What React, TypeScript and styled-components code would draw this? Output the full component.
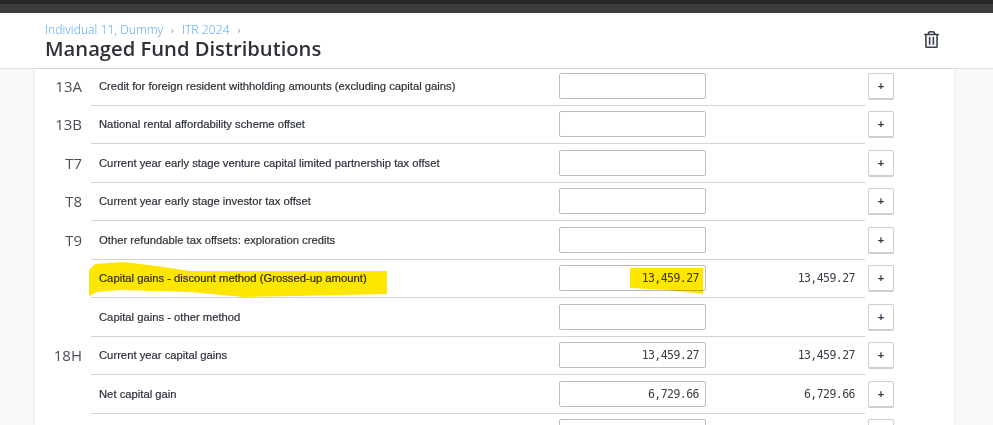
import styled, { createGlobalStyle } from "styled-components";
import { FaRegTrashAlt } from "react-icons/fa";

const GlobalStyle = createGlobalStyle`
    html, body {
        margin: 0;
        height: 425px;
        overflow: hidden;
        background-color: #f7f8fa;
    }
`;

const TopBar = styled.div`
    height: 13px;
    box-sizing: border-box;
    background-color: #3d3d3d;
    border-top: 4px solid #282828;
`;

const Header = styled.header`
    height: 56px;
    box-sizing: border-box;
    display: flex;
    justify-content: space-between;
    padding: 9px 53px 0 45px;
    background-color: #fff;
    border-bottom: 1px solid #dedede;
`;

const Crumbs = styled.div`
    display: flex;
    align-items: center;
    gap: 8px;
    height: 15px;
    font: 300 12.2px/15px "Open Sans", sans-serif;
    color: #4fa3ee;
`;

const Chevron = styled.span`
    font-size: 11px;
    color: #666;
`;

const Title = styled.h1`
    margin: 0;
    font: 600 20.2px/23px "Open Sans", sans-serif;
    color: #2e3238;
`;

const TrashButton = styled.div`
    margin-top: 9px;
    color: #39414d;
    font-size: 17px;
    line-height: 17px;
`;

const Card = styled.main`
    width: 919px;
    height: 356px;
    margin-left: 35px;
    overflow: hidden;
    background-color: #fff;
    box-shadow: 0 0 3px rgba(0, 0, 0, 0.08);
`;

const Row = styled.div`
    position: relative;
    display: flex;
    height: 38.5px;
    box-sizing: border-box;
    &:first-child {
        height: 36.75px;
    }
`;

const Code = styled.div`
    width: 56px;
    box-sizing: border-box;
    padding: 5.25px 9px 0 0;
    text-align: right;
    font: 400 15px/26px "Open Sans", sans-serif;
    color: #4a4f56;
    ${Row}:first-child & {
        padding-top: 4px;
    }
`;

const Line = styled.div`
    width: 774px;
    box-sizing: border-box;
    display: flex;
    padding: 5.25px 10px 0 8px;
    border-bottom: 1px solid #d4d4d4;
    ${Row}:first-child & {
        padding-top: 4px;
    }
`;

const Label = styled.div`
    width: 460px;
    font: 400 11.25px/26px "Liberation Sans", Arial, sans-serif;
    -webkit-text-stroke: 0.2px #2c3138;
    color: #2c3138;
`;

const Amount = styled.input`
    width: 147px;
    height: 26px;
    box-sizing: border-box;
    padding: 0 6px 0 0;
    border: 1px solid #bcbcbc;
    border-radius: 2px;
    outline: none;
    background: transparent;
    text-align: right;
    font: 400 11.5px "DejaVu Sans Mono", monospace;
    letter-spacing: -0.55px;
    color: #3a3f46;
`;

const Total = styled.div`
    flex: 1;
    text-align: right;
    font: 400 11.5px/26px "DejaVu Sans Mono", monospace;
    letter-spacing: -0.55px;
    color: #3a3f46;
`;

const AddButton = styled.button`
    width: 26px;
    height: 27px;
    margin: 5.25px 0 0 3px;
    padding: 0;
    box-sizing: border-box;
    border: 1px solid #cfcfcf;
    border-bottom-width: 2px;
    border-radius: 2px;
    background-color: #fff;
    font: 700 11px "Liberation Sans", sans-serif;
    color: #333a44;
    ${Row}:first-child & {
        margin-top: 4px;
    }
`;

const Marker = styled.svg<{ $left: number }>`
    position: absolute;
    left: ${(props) => props.$left}px;
    top: 0;
    overflow: visible;
    mix-blend-mode: multiply;
    pointer-events: none;
`;

const rows = [
    { code: "13A", label: "Credit for foreign resident withholding amounts (excluding capital gains)" },
    { code: "13B", label: "National rental affordability scheme offset" },
    { code: "T7", label: "Current year early stage venture capital limited partnership tax offset" },
    { code: "T8", label: "Current year early stage investor tax offset" },
    { code: "T9", label: "Other refundable tax offsets: exploration credits" },
    { code: "", label: "Capital gains - discount method (Grossed-up amount)", value: "13,459.27", total: "13,459.27", marked: true },
    { code: "", label: "Capital gains - other method" },
    { code: "18H", label: "Current year capital gains", value: "13,459.27", total: "13,459.27" },
    { code: "", label: "Net capital gain", value: "6,729.66", total: "6,729.66" },
    { code: "", label: "" },
];

export default function App() {
    return (
        <>
            <GlobalStyle />
            <TopBar />
            <Header>
                <div>
                    <Crumbs>
                        <span>Individual 11, Dummy</span>
                        <Chevron>›</Chevron>
                        <span>ITR 2024</span>
                        <Chevron>›</Chevron>
                    </Crumbs>
                    <Title>Managed Fund Distributions</Title>
                </div>
                <TrashButton>
                    <FaRegTrashAlt />
                </TrashButton>
            </Header>
            <Card>
                {rows.map((row, i) => (
                    <Row key={i}>
                        <Code>{row.code}</Code>
                        <Line>
                            <Label>{row.label}</Label>
                            <Amount readOnly value={row.value ?? ""} />
                            <Total>{row.total}</Total>
                        </Line>
                        <AddButton>+</AddButton>
                        {row.marked && (
                            <>
                                <Marker $left={54} width="298" height="36" fill="#ffe600">
                                    <polygon points="0,10 6,4 34,2 68,6 101,11 298,11 298,34 208,36 154,37 101,32 31,30 8,32 0,36" />
                                </Marker>
                                <Marker $left={595} width="74" height="34" fill="#ffe600">
                                    <polygon points="0,8 73,8 73,34 65,33 37,30 0,28" />
                                </Marker>
                            </>
                        )}
                    </Row>
                ))}
            </Card>
        </>
    );
}
